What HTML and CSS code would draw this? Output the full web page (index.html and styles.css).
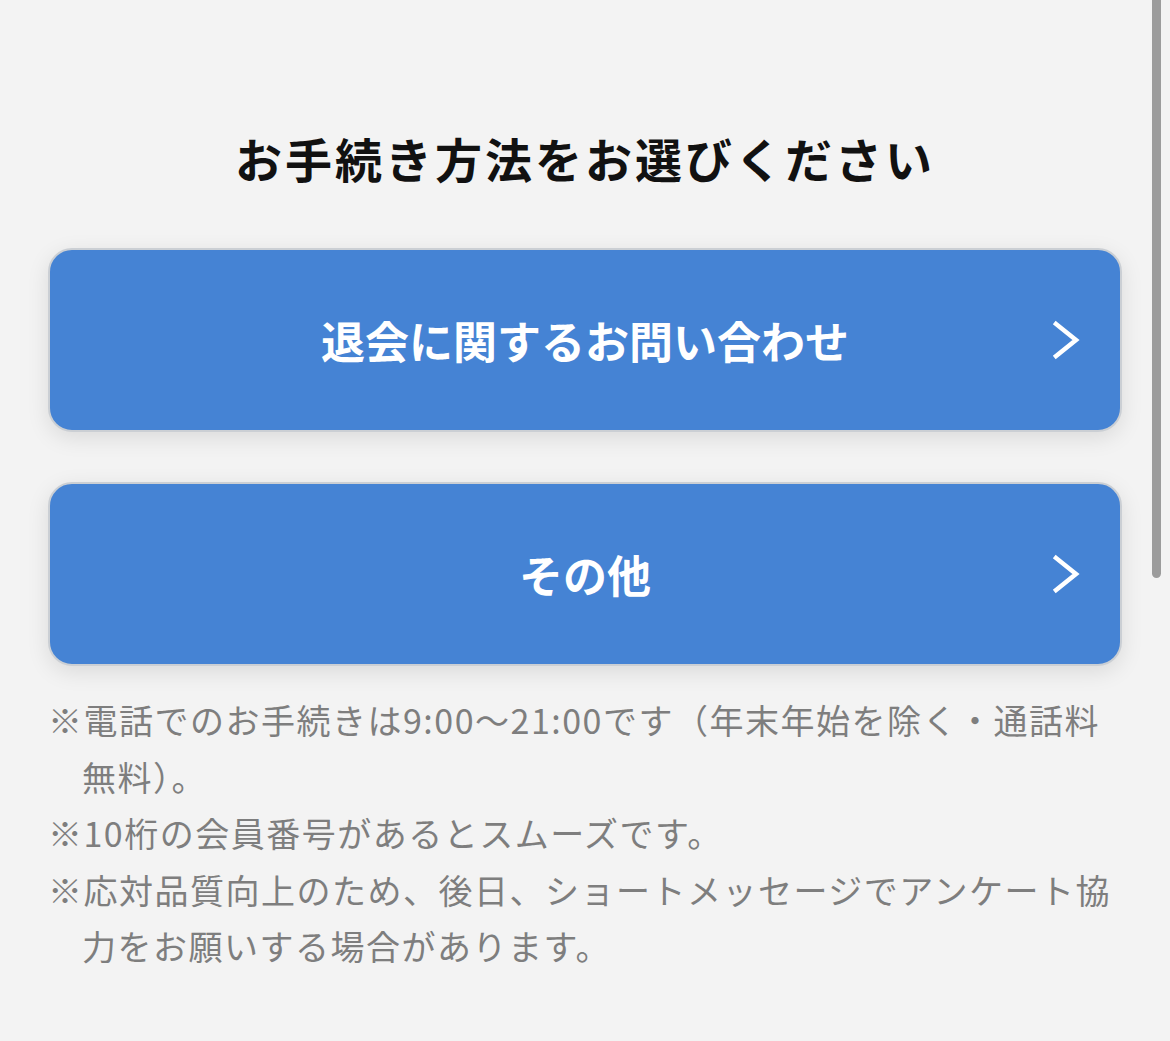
FILE: index.html
```html
<!DOCTYPE html>
<html lang="ja">
<head>
    <meta charset="UTF-8">
    <meta name="viewport" content="width=device-width, initial-scale=1.0">
    <title>お手続き方法</title>
    <link rel="stylesheet" href="styles.css">
</head>
<body>
    <main class="page">
        <h1 class="page-title">お手続き方法をお選びください</h1>

        <a class="choice-btn" href="#">
            <span class="choice-label">退会に関するお問い合わせ</span>
            <svg class="chevron" viewBox="0 0 30 40" aria-hidden="true">
                <polyline points="4,4 24,20 4,36" />
            </svg>
        </a>

        <a class="choice-btn" href="#">
            <span class="choice-label">その他</span>
            <svg class="chevron" viewBox="0 0 30 40" aria-hidden="true">
                <polyline points="4,4 24,20 4,36" />
            </svg>
        </a>

        <ul class="notes">
            <li>※電話でのお手続きは9:00〜21:00です（年末年始を除く・通話料無料）。</li>
            <li>※10桁の会員番号があるとスムーズです。</li>
            <li>※応対品質向上のため、後日、ショートメッセージでアンケート協力をお願いする場合があります。</li>
        </ul>
    </main>
    <div class="scroll-thumb"></div>
</body>
</html>
```

FILE: styles.css
```css
body {
    margin: 0;
    padding: 0;
    background-color: #f3f3f3;
    font-family: "Noto Sans CJK JP", "Noto Sans", sans-serif;
}

.page {
    padding: 126px 48px 40px;
}

.page-title {
    margin: 0 0 58px;
    font-size: 47px;
    line-height: 64px;
    font-weight: 700;
    letter-spacing: 3px;
    text-align: center;
    color: #111;
}

.choice-btn {
    position: relative;
    display: flex;
    align-items: center;
    justify-content: center;
    height: 180px;
    margin-bottom: 50px;
    background-color: #4583d4;
    border: 2px solid #cbcfd4;
    border-radius: 24px;
    box-shadow: 0 6px 22px rgba(0, 0, 0, 0.10);
    text-decoration: none;
}

.choice-btn:last-of-type {
    margin-bottom: 26px;
}

.choice-label {
    color: white;
    font-size: 44px;
    font-weight: 700;
}

.chevron {
    position: absolute;
    right: 38px;
    top: 50%;
    width: 30px;
    height: 40px;
    margin-top: -20px;
    fill: none;
    stroke: white;
    stroke-width: 4.5;
    stroke-linecap: square;
    stroke-linejoin: miter;
}

.notes {
    list-style: none;
    margin: 0;
    padding: 0;
    color: #7e7e7e;
    font-size: 34px;
    line-height: 56.5px;
    letter-spacing: 1.5px;
}

.notes li {
    padding-left: 1em;
    text-indent: -1em;
}

.scroll-thumb {
    position: fixed;
    top: 0;
    right: 9px;
    width: 9px;
    height: 578px;
    background-color: #9c9c9c;
    border-radius: 0 0 5px 5px;
}
```
